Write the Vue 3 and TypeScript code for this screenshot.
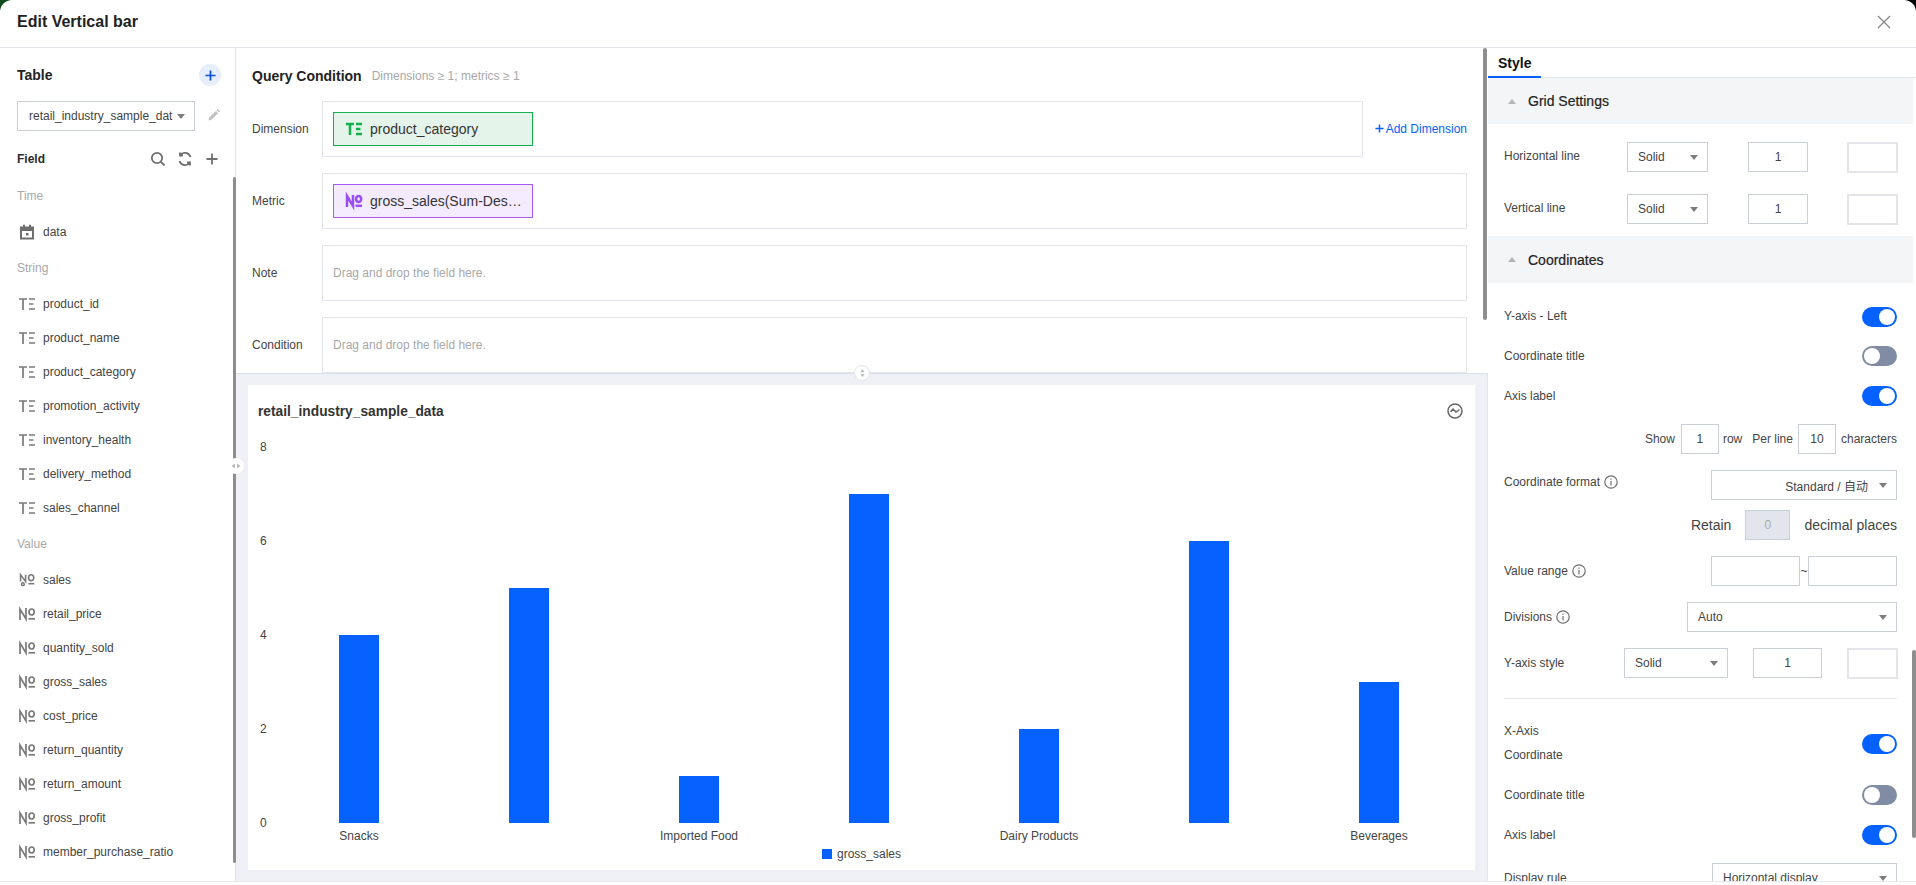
<template>
  <div class="backdrop">
    <div class="dialog">
      <header class="head">
        <h1>Edit Vertical bar</h1>
        <svg class="close" viewBox="0 0 16 16"><path d="M2 2l12 12M14 2L2 14" /></svg>
      </header>

      <div class="body">
        <aside class="left">
          <div class="table-head">
            <span class="table-title">Table</span>
            <span class="add-round">
              <svg viewBox="0 0 12 12"><path d="M6 .5v11M.5 6h11" /></svg>
            </span>
          </div>
          <div class="table-pick">
            <div class="select table-select">
              <span class="clip">retail_industry_sample_data</span>
              <i class="caret"></i>
            </div>
            <svg class="pencil" viewBox="0 0 14 14"><path d="M1.500 12.500l.7-3 6.600-6.600 2.300 2.300-6.600 6.600zM9.600 2.100l1-1 2.300 2.300-1 1z" /></svg>
          </div>
          <div class="field-head">
            <span>Field</span>
            <div class="field-tools">
              <svg viewBox="0 0 16 16"><circle cx="7" cy="7" r="5.200" /><path d="M10.700 10.700l3.800 3.800" /></svg>
              <svg viewBox="0 0 16 16"><path d="M13.500 6A6 6 0 0 0 3 4.200M2.500 10A6 6 0 0 0 13 11.800M3 1.500v3h3M13 14.500v-3h-3" /></svg>
              <svg viewBox="0 0 16 16"><path d="M8 2.500v11M2.500 8h11" /></svg>
            </div>
          </div>
          <div class="field-list">
            <template v-for="group in fieldGroups" :key="group.name">
              <div class="group-name">{{ group.name }}</div>
              <div v-for="f in group.fields" :key="f" class="field">
                <svg v-if="group.kind === 'date'" class="kind date" viewBox="0 0 16 16">
                  <path d="M1 2.500h3V.8h2v1.700h4V.8h2v1.700h3v13H1zM3 7v6.500h10V7zM7 9h2.500v2.500H7z" fill-rule="evenodd" />
                </svg>
                <svg v-else-if="group.kind === 'text'" class="kind glyph" viewBox="0 0 16 12">
                  <path d="M0 1h8M4 1v11M10 1h6M10 6h4.500M10 11h6" />
                </svg>
                <svg v-else-if="f === 'sales'" class="kind glyph" viewBox="0 0 16 13">
                  <path d="M1 8V.8l5.500 7.200V.8" />
                  <ellipse cx="12.500" cy="4" rx="2.800" ry="3.200" />
                  <path d="M9.500 10.500h6.500" />
                  <circle cx="3.500" cy="11" r="1.500" />
                </svg>
                <svg v-else class="kind glyph" viewBox="0 0 16 12">
                  <path d="M1 12V1l6 10V0" />
                  <ellipse cx="12.600" cy="4" rx="2.600" ry="3" />
                  <path d="M9.500 10.800h6.500" />
                </svg>
                <span>{{ f }}</span>
              </div>
            </template>
          </div>
          <div class="left-scroll"></div>
        </aside>

        <main class="center">
          <section class="query">
            <div class="query-head">
              <span class="query-title">Query Condition</span>
              <span class="query-hint">Dimensions ≥ 1; metrics ≥ 1</span>
            </div>
            <div class="drop-row">
              <label>Dimension</label>
              <div class="drop">
                <div class="chip green">
                  <svg class="kind glyph bold" viewBox="0 0 16 12"><path d="M0 1h8M4 1v11M10 1h6M10 6h4.500M10 11h6" /></svg>
                  <span>product_category</span>
                </div>
              </div>
              <a class="add-dim"><svg viewBox="0 0 10 10"><path d="M5 .5v9M.5 5h9" /></svg>Add Dimension</a>
            </div>
            <div class="drop-row">
              <label>Metric</label>
              <div class="drop">
                <div class="chip purple">
                  <svg class="kind glyph bold" viewBox="0 0 16 12">
                    <path d="M1 12V1l6 10V0" />
                    <ellipse cx="12.600" cy="4" rx="2.600" ry="3" />
                    <path d="M9.500 10.800h6.500" />
                  </svg>
                  <span>gross_sales(Sum-Des…</span>
                </div>
              </div>
            </div>
            <div class="drop-row">
              <label>Note</label>
              <div class="drop hint">Drag and drop the field here.</div>
            </div>
            <div class="drop-row last">
              <label>Condition</label>
              <div class="drop hint">Drag and drop the field here.</div>
            </div>
            <span class="v-handle">
              <svg viewBox="0 0 8 10"><path d="M4 .5L6.500 4h-5zM4 9.500L1.500 6h5z" /></svg>
            </span>
          </section>

          <section class="stage">
            <div class="card">
              <div class="card-head">
                <span>retail_industry_sample_data</span>
                <svg viewBox="0 0 16 16"><circle cx="8" cy="8" r="7" /><path d="M3.500 9l2.500-3 3 3 3.500-2.500" /></svg>
              </div>
              <div class="chart">
                <div class="y-axis">
                  <span v-for="t in ticks" :key="t">{{ t }}</span>
                </div>
                <div class="plot">
                  <div v-for="(b, i) in bars" :key="i" class="bar-col">
                    <div class="bar" :style="{ height: b.value * unit + 'px' }"></div>
                    <span class="bar-label">{{ b.label }}</span>
                  </div>
                </div>
              </div>
              <div class="legend"><i></i>gross_sales</div>
            </div>
            <span class="h-handle">
              <svg viewBox="0 0 10 8"><path d="M.5 4L4 1.500v5zM9.500 4L6 1.500v5z" /></svg>
            </span>
          </section>
          <div class="center-scroll"></div>
        </main>

        <aside class="right">
          <div class="tabs"><span class="tab">Style</span></div>
          <div class="settings">
            <div class="sec-head"><i class="up"></i>Grid Settings</div>
            <div class="line-row first">
              <span class="lbl">Horizontal line</span>
              <div class="select solid"><span>Solid</span><i class="caret"></i></div>
              <div class="input num">1</div>
              <div class="swatch"></div>
            </div>
            <div class="line-row second">
              <span class="lbl">Vertical line</span>
              <div class="select solid"><span>Solid</span><i class="caret"></i></div>
              <div class="input num">1</div>
              <div class="swatch"></div>
            </div>
            <div class="sec-head coords"><i class="up"></i>Coordinates</div>

            <div class="pad">
              <div class="toggle-row y1"><span>Y-axis - Left</span><span class="switch on"></span></div>
              <div class="toggle-row"><span>Coordinate title</span><span class="switch"></span></div>
              <div class="toggle-row"><span>Axis label</span><span class="switch on"></span></div>

              <div class="show-row">
                <span class="m-show">Show</span><div class="input box38">1</div>
                <span class="m-row">row</span><span class="m-per">Per line</span><div class="input box38">10</div>
                <span class="m-chars">characters</span>
              </div>

              <div class="form-row fmt">
                <span class="with-info">Coordinate format <svg class="info" viewBox="0 0 14 14"><circle cx="7" cy="7" r="6.200" /><path d="M7 6v4.500M7 3.500v1.300" /></svg></span>
                <div class="select w186 right-text"><span>Standard / 自动</span><i class="caret"></i></div>
              </div>
              <div class="retain-row">
                <span>Retain</span>
                <div class="input disabled">0</div>
                <span>decimal places</span>
              </div>
              <div class="form-row range">
                <span class="with-info">Value range <svg class="info" viewBox="0 0 14 14"><circle cx="7" cy="7" r="6.200" /><path d="M7 6v4.500M7 3.500v1.300" /></svg></span>
                <div class="range-inputs"><div class="input w89"></div><span>~</span><div class="input w89"></div></div>
              </div>
              <div class="form-row div-row">
                <span class="with-info">Divisions <svg class="info" viewBox="0 0 14 14"><circle cx="7" cy="7" r="6.200" /><path d="M7 6v4.500M7 3.500v1.300" /></svg></span>
                <div class="select w210"><span>Auto</span><i class="caret"></i></div>
              </div>
              <div class="axis-style">
                <span class="lbl">Y-axis style</span>
                <div class="select w104"><span>Solid</span><i class="caret"></i></div>
                <div class="input w69">1</div>
                <div class="swatch"></div>
              </div>
              <div class="rule"></div>
              <div class="toggle-row x1">
                <span class="two-line">X-Axis<br />Coordinate</span><span class="switch on"></span>
              </div>
              <div class="toggle-row x2"><span>Coordinate title</span><span class="switch"></span></div>
              <div class="toggle-row"><span>Axis label</span><span class="switch on"></span></div>
              <div class="form-row disp">
                <span>Display rule</span>
                <div class="select w185"><span>Horizontal display</span><i class="caret"></i></div>
              </div>
            </div>
          </div>
          <div class="right-scroll"></div>
        </aside>
      </div>
    </div>
  </div>
</template>

<script setup lang="ts">
interface FieldGroup {
  name: string;
  kind: "date" | "text" | "num";
  fields: string[];
}

interface Bar {
  label: string;
  value: number;
}

const fieldGroups: FieldGroup[] = [
  { name: "Time", kind: "date", fields: ["data"] },
  {
    name: "String",
    kind: "text",
    fields: [
      "product_id",
      "product_name",
      "product_category",
      "promotion_activity",
      "inventory_health",
      "delivery_method",
      "sales_channel",
    ],
  },
  {
    name: "Value",
    kind: "num",
    fields: [
      "sales",
      "retail_price",
      "quantity_sold",
      "gross_sales",
      "cost_price",
      "return_quantity",
      "return_amount",
      "gross_profit",
      "member_purchase_ratio",
    ],
  },
];

const ticks: number[] = [8, 6, 4, 2, 0];
const unit = 47;
const bars: Bar[] = [
  { label: "Snacks", value: 4 },
  { label: "", value: 5 },
  { label: "Imported Food", value: 1 },
  { label: "", value: 7 },
  { label: "Dairy Products", value: 2 },
  { label: "", value: 6 },
  { label: "Beverages", value: 3 },
];
</script>

<style>
html,
body {
  margin: 0;
  height: 100%;
  overflow: hidden;
  background: #000;
}
</style>

<style scoped>
* {
  box-sizing: border-box;
}

.backdrop {
  width: 1916px;
  height: 885px;
  background: linear-gradient(90deg, #0d4a1c 0 50%, #000 50% 100%);
  font-family: "Liberation Sans", "Noto Sans CJK SC", Arial, sans-serif;
  font-size: 12px;
  color: #33383f;
}

.dialog {
  height: 885px;
  background: #fff;
  border-radius: 12px 12px 0 0;
  display: flex;
  flex-direction: column;
  overflow: hidden;
  padding-bottom: 3px;
}

.head {
  height: 48px;
  flex: none;
  display: flex;
  align-items: center;
  justify-content: space-between;
  padding: 0 24px 3px 17px;
  border-bottom: 1px solid #e3e5ed;
}

.head h1 {
  margin: 0;
  font-size: 16px;
  font-weight: 700;
  color: #222;
}

.close {
  width: 16px;
  height: 16px;
  fill: none;
  stroke: #888;
  stroke-width: 1.300;
}

.body {
  flex: 1;
  display: flex;
  min-height: 0;
  border-bottom: 1px solid #e8e9ef;
}

/* left column */
.left {
  width: 236px;
  flex: none;
  position: relative;
  box-shadow: inset -1px 0 0 #e3e5ed;
  padding: 0 15px 0 17px;
  overflow: hidden;
}

.table-head {
  display: flex;
  align-items: center;
  justify-content: space-between;
  height: 22px;
  margin-top: 16px;
}

.table-title {
  font-size: 14px;
  font-weight: 700;
  color: #222;
}

.add-round {
  width: 22px;
  height: 22px;
  border-radius: 50%;
  background: #e6edfb;
  display: flex;
  align-items: center;
  justify-content: center;
}

.add-round svg {
  width: 11px;
  height: 11px;
  fill: none;
  stroke: #0b4fd6;
  stroke-width: 1.900;
}

.table-pick {
  display: flex;
  align-items: center;
  justify-content: space-between;
  margin-top: 15px;
}

.select {
  height: 30px;
  border: 1px solid #c9ced9;
  background: #fff;
  display: flex;
  align-items: center;
  justify-content: space-between;
  padding: 0 9px 0 10px;
  color: #444;
  font-size: 12px;
  flex: none;
}

.table-select {
  width: 178px;
}

.clip {
  width: 144px;
  margin-left: 1px;
  overflow: hidden;
  white-space: nowrap;
}

.caret {
  width: 0;
  height: 0;
  flex: none;
  border-left: 4px solid transparent;
  border-right: 4px solid transparent;
  border-top: 5px solid #7d7d7d;
}

.pencil {
  width: 14px;
  height: 14px;
  margin: -3px 0 0 0;
  fill: #c2c2c2;
}

.field-head {
  display: flex;
  align-items: center;
  justify-content: space-between;
  margin-top: 19px;
  height: 18px;
  font-weight: 700;
  color: #2c2c2c;
}

.field-tools {
  display: flex;
  gap: 11px;
  margin-right: 1px;
}

.field-tools svg {
  width: 16px;
  height: 16px;
  fill: none;
  stroke: #6f6f6f;
  stroke-width: 1.800;
}

.field-list {
  margin-top: 9px;
}

.group-name {
  height: 38px;
  line-height: 38px;
  color: #a8a8a8;
}

.field {
  height: 34px;
  display: flex;
  align-items: center;
  color: #444;
}

.kind {
  width: 16px;
  margin: 0 8px 0 2px;
  flex: none;
}

.kind.date {
  height: 16px;
  fill: #6e6e6e;
}

.kind.glyph {
  height: 12px;
  overflow: visible;
  fill: none;
  stroke: #7a7a7a;
  stroke-width: 1.700;
}

.kind.bold {
  margin: 0 8px 0 0;
  stroke-width: 2.500;
}

.green .kind.bold {
  stroke: #12b14b;
}

.purple .kind.bold {
  stroke: #9a4ff5;
}

.left-scroll {
  position: absolute;
  right: 0;
  top: 129px;
  width: 3px;
  height: 686px;
  background: #8e8e8e;
  border-radius: 2px;
}

/* middle column */
.center {
  flex: 1;
  min-width: 0;
  display: flex;
  flex-direction: column;
  position: relative;
}

.query {
  height: 326px;
  flex: none;
  padding: 0 21px 0 16px;
  border-bottom: 1px solid #dfe1e8;
  position: relative;
}

.query-head {
  height: 53px;
  display: flex;
  align-items: center;
  gap: 10px;
  padding-top: 2px;
}

.query-title {
  font-size: 14px;
  font-weight: 700;
  color: #222;
}

.query-hint {
  color: #a8a8a8;
}

.drop-row {
  display: flex;
  align-items: center;
  height: 56px;
  margin-bottom: 16px;
}

.drop-row.last {
  margin-bottom: 0;
}

.drop-row label {
  width: 70px;
  flex: none;
  color: #444;
}

.drop {
  flex: 1;
  height: 56px;
  border: 1px solid #e3e5ed;
  padding: 10px;
  display: flex;
  align-items: center;
}

.drop.hint {
  color: #a8a8a8;
}

.add-dim {
  width: 104px;
  flex: none;
  text-align: right;
  color: #0561ff;
  white-space: nowrap;
}

.add-dim svg {
  width: 9px;
  height: 9px;
  margin-right: 2px;
  fill: none;
  stroke: #0561ff;
  stroke-width: 1.600;
}

.chip {
  width: 200px;
  height: 34px;
  display: flex;
  align-items: center;
  padding-left: 12px;
  font-size: 14px;
  color: #333;
  white-space: nowrap;
}

.chip.green {
  background: #e5f4ea;
  border: 1px solid #12b14b;
}

.chip.purple {
  background: #f4ebfe;
  border: 1px solid #a45cf5;
}

.v-handle {
  position: absolute;
  left: 618px;
  bottom: -8px;
  width: 16px;
  height: 16px;
  border-radius: 50%;
  background: #fff;
  border: 1px solid #e3e5ed;
  display: flex;
  align-items: center;
  justify-content: center;
  z-index: 2;
}

.v-handle svg {
  width: 7px;
  height: 10px;
  fill: #bbb;
}

.stage {
  flex: 1;
  min-height: 0;
  background: #eff0f5;
  padding: 11px 12px 0;
  border-right: 1px solid #e3e5ed;
  position: relative;
}

.h-handle {
  position: absolute;
  left: -8px;
  top: 84px;
  width: 16px;
  height: 16px;
  border-radius: 50%;
  background: #fff;
  display: flex;
  align-items: center;
  justify-content: center;
  z-index: 2;
}

.h-handle svg {
  width: 10px;
  height: 8px;
  fill: #bbb;
}

.center-scroll {
  position: absolute;
  right: 1px;
  top: 0;
  width: 4px;
  height: 272px;
  background: #8e8e8e;
  border-radius: 2px;
}

.card {
  height: 485px;
  background: #fff;
  padding: 0 10px;
}

.card-head {
  height: 52px;
  display: flex;
  align-items: center;
  justify-content: space-between;
  padding-right: 2px;
  font-size: 13.750px;
  font-weight: 700;
  color: #333;
}

.card-head svg {
  width: 16px;
  height: 16px;
  fill: none;
  stroke: #666;
  stroke-width: 1.500;
}

.chart {
  display: flex;
  height: 409px;
}

.y-axis {
  width: 16px;
  flex: none;
  height: 390px;
  margin-top: 3px;
  padding-left: 2px;
  display: flex;
  flex-direction: column;
  justify-content: space-between;
  line-height: 14px;
  color: #444;
}

.plot {
  flex: 1;
  display: grid;
  grid-template-columns: repeat(7, 170px);
}

.bar-col {
  height: 397px;
  display: flex;
  flex-direction: column;
  align-items: center;
  justify-content: flex-end;
}

.bar {
  width: 40px;
  background: #0561ff;
}

.bar-label {
  height: 27px;
  margin-bottom: -16px;
  line-height: 27px;
  white-space: nowrap;
  color: #444;
}

.legend {
  display: flex;
  align-items: center;
  justify-content: center;
  gap: 5px;
  height: 16px;
  color: #444;
}

.legend i {
  width: 10px;
  height: 10px;
  background: #0561ff;
}

/* right column */
.right {
  width: 428px;
  flex: none;
  position: relative;
  overflow: hidden;
}

.tabs {
  height: 30px;
  border-bottom: 1px solid #e3e5ed;
}

.tab {
  display: block;
  width: 53px;
  height: 30px;
  line-height: 30px;
  padding-left: 10px;
  font-size: 14px;
  font-weight: 700;
  color: #111;
  border-bottom: 2px solid #0561ff;
}

.sec-head {
  width: 425px;
  height: 46px;
  background: #f4f5f7;
  display: flex;
  align-items: center;
  padding-left: 20px;
  font-size: 14px;
  color: #222;
  -webkit-text-stroke: 0.2px #222;
}

.sec-head.coords {
  height: 47px;
}

.up {
  width: 0;
  height: 0;
  margin-right: 12px;
  border-left: 4px solid transparent;
  border-right: 4px solid transparent;
  border-bottom: 5px solid #b5b5b5;
}

.line-row {
  display: flex;
  align-items: center;
  padding-left: 16px;
  height: 30px;
}

.line-row.first {
  margin-top: 18px;
}

.line-row.second {
  margin-top: 22px;
  margin-bottom: 12px;
}

.lbl {
  width: 123px;
  flex: none;
  color: #444;
}

.line-row .lbl {
  margin-top: -3px;
}

.solid {
  width: 81px;
}

.input {
  height: 30px;
  border: 1px solid #c9ced9;
  display: flex;
  align-items: center;
  justify-content: center;
  color: #444;
  flex: none;
}

.num {
  width: 60px;
  margin-left: 40px;
}

.swatch {
  width: 51px;
  height: 31px;
  margin-left: 39px;
  border: 2px solid #e3e5ea;
  flex: none;
  align-self: flex-start;
}

.pad {
  padding: 0 19px 0 16px;
}

.toggle-row {
  display: flex;
  align-items: center;
  justify-content: space-between;
  height: 20px;
  margin-top: 20px;
  color: #444;
}

.toggle-row.y1 {
  margin-top: 24px;
  margin-bottom: -1px;
}

.toggle-row.y1 span:first-child {
  margin-top: -2px;
}

.toggle-row.x1 {
  margin-top: 35px;
}

.toggle-row.x2 {
  margin-top: 31px;
}

.two-line {
  line-height: 24px;
  display: block;
  margin-top: -2px;
}

.switch {
  width: 35px;
  height: 20px;
  border-radius: 10px;
  background: #7f8ca3;
  position: relative;
  flex: none;
}

.switch::after {
  content: "";
  position: absolute;
  left: 2px;
  top: 2px;
  width: 16px;
  height: 16px;
  border-radius: 50%;
  background: #fff;
}

.switch.on {
  background: #0561ff;
}

.switch.on::after {
  left: 17px;
}

.show-row {
  display: flex;
  align-items: center;
  justify-content: flex-end;
  margin-top: 18px;
  color: #444;
}

.box38 {
  width: 38px;
}

.m-show {
  margin-right: 6px;
}

.m-row {
  margin-left: 4px;
}

.m-per {
  margin: 0 5px 0 10px;
}

.m-chars {
  margin-left: 5px;
}

.form-row {
  display: flex;
  align-items: center;
  justify-content: space-between;
  color: #444;
}

.fmt {
  margin-top: 16px;
}

.fmt .with-info {
  margin-top: -6px;
}

.with-info {
  display: flex;
  align-items: center;
  gap: 4px;
}

.info {
  width: 14px;
  height: 14px;
  fill: none;
  stroke: #6f6f6f;
  stroke-width: 1.200;
}

.w186 {
  width: 186px;
}

.right-text {
  justify-content: flex-end;
  gap: 11px;
}

.retain-row {
  display: flex;
  align-items: center;
  justify-content: flex-end;
  gap: 14px;
  margin-top: 10px;
  font-size: 14px;
  color: #444;
}

.disabled {
  width: 45px;
  background: #e2e5ec;
  color: #aaa;
  font-size: 12px;
}

.range {
  margin-top: 16px;
}

.range-inputs {
  display: flex;
  align-items: center;
}

.range-inputs span {
  width: 8px;
  text-align: center;
}

.w89 {
  width: 89px;
}

.div-row {
  margin-top: 16px;
}

.w210 {
  width: 210px;
}

.axis-style {
  display: flex;
  align-items: center;
  margin-top: 16px;
  height: 30px;
}

.w104 {
  width: 104px;
  margin-left: -3px;
}

.w69 {
  width: 69px;
  margin-left: 25px;
}

.axis-style .swatch {
  margin-left: 25px;
  margin-right: -1px;
}

.rule {
  height: 1px;
  margin-top: 20px;
  background: #e3e5ed;
}

.disp {
  margin-top: 18px;
}

.w185 {
  width: 185px;
}

.right-scroll {
  position: absolute;
  right: 0;
  top: 602px;
  width: 4px;
  height: 188px;
  background: #8e8e8e;
  border-radius: 2px;
}
</style>
